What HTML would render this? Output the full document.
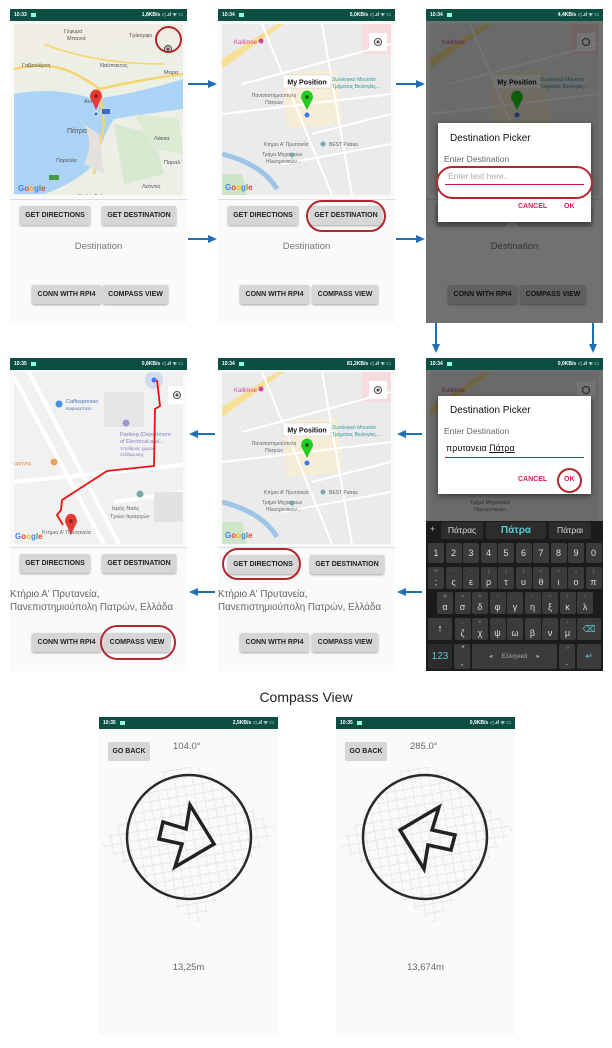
<!DOCTYPE html>
<html><head><meta charset="utf-8"><style>
*{margin:0;padding:0;box-sizing:border-box}
body{width:612px;height:1048px;background:#fff;position:relative;overflow:hidden;font-family:"Liberation Sans","DejaVu Sans",sans-serif}
.a{position:absolute}
.scr{position:absolute;background:#fafafa;overflow:hidden}
.sb{position:absolute;left:0;top:0;right:0;height:12px;background:#0b4f43;color:#fff;font-size:5px;font-weight:bold;line-height:12px;padding:0 4px}
.sb .r{position:absolute;right:4px;top:0}
.sb .ic{display:inline-block;width:5px;height:4px;background:#8fd;margin-left:3px;vertical-align:middle}
.btn{position:absolute;height:19px;background:#d6d6d6;border-radius:2px;box-shadow:0 1px 2px rgba(0,0,0,.35);font-size:7px;font-weight:bold;color:#222;text-align:center;line-height:19px;white-space:nowrap}
.dest{position:absolute;left:0;right:0;text-align:center;font-size:9.5px;color:#777}
.addr{position:absolute;left:0;font-size:9.8px;color:#666;line-height:13px;white-space:nowrap}
.ell{position:absolute;border:2.5px solid #b3262d;border-radius:50%}
.dim{position:absolute;left:0;right:0;bottom:0;top:12px;background:rgba(0,0,0,.55)}
.dlg{position:absolute;background:#fff;box-shadow:0 2px 6px rgba(0,0,0,.5)}
.kb{position:absolute;background:#1b1b1b}
.key{position:absolute;background:#3b3b3b;border-radius:2px;color:#ddd;text-align:center;font-size:9px}
.key small{position:absolute;top:1px;left:0;right:0;font-size:4px;color:#999}
.key span{position:absolute;bottom:2px;left:0;right:0}
</style></head><body>

<svg class="a" style="left:0;top:0" width="612" height="700">
<g stroke="#1f6fb5" stroke-width="2" fill="#1f6fb5">
<line x1="188" y1="84" x2="210" y2="84"/><polygon points="217,84 208,80 208,88" stroke="none"/>
<line x1="188" y1="239" x2="210" y2="239"/><polygon points="217,239 208,235 208,243" stroke="none"/>
<line x1="396" y1="84" x2="418" y2="84"/><polygon points="425,84 416,80 416,88" stroke="none"/>
<line x1="396" y1="239" x2="418" y2="239"/><polygon points="425,239 416,235 416,243" stroke="none"/>
<line x1="436" y1="323" x2="436" y2="345"/><polygon points="436,353 432,344 440,344" stroke="none"/>
<line x1="593" y1="323" x2="593" y2="345"/><polygon points="593,353 589,344 597,344" stroke="none"/>
<line x1="422" y1="434" x2="405" y2="434"/><polygon points="397,434 406,430 406,438" stroke="none"/>
<line x1="422" y1="592" x2="405" y2="592"/><polygon points="397,592 406,588 406,596" stroke="none"/>
<line x1="215" y1="434" x2="197" y2="434"/><polygon points="189,434 198,430 198,438" stroke="none"/>
<line x1="215" y1="592" x2="197" y2="592"/><polygon points="189,592 198,588 198,596" stroke="none"/>
</g></svg>

<!-- SCREEN A -->
<div class="scr" style="left:10px;top:9px;width:177px;height:314px">
<div class="sb">10:33 <span class="ic"></span><span class="r">1,8KB/s ◁ .ıl ᯤ ▭</span></div>
<svg class="a" style="left:4px;top:15px" width="169" height="171">
<rect width="169" height="171" fill="#ecefe6"/>
<path d="M0,70 Q40,60 80,75 Q120,70 169,55 L169,85 Q130,90 100,95 Q90,110 80,140 Q60,160 30,170 L0,170 Z" fill="#aad3f5"/>
<path d="M0,60 Q40,50 80,60 Q120,55 169,40 L169,55 Q120,70 80,75 Q40,62 0,70 Z" fill="#ecefe6"/>
<path d="M0,35 Q60,20 169,20 L169,0 L0,0 Z" fill="#f0ede5"/>
<path d="M100,100 L140,110 L150,150 L110,160 Z" fill="#d6e8d0"/>
<path d="M120,90 L165,95 L169,130 L140,125 Z" fill="#dcebd3"/>
<path d="M0,45 Q40,35 70,55 Q80,60 85,65 L90,100 L80,150 M85,65 Q130,55 169,50" stroke="#f6d56a" stroke-width="2.5" fill="none"/>
<path d="M30,20 Q80,40 150,40" stroke="#f6d56a" stroke-width="1.5" fill="none"/>
<path d="M70,100 Q80,120 70,140 L90,150 L85,110 Z" fill="#e4e1dc"/>
<g font-size="5.5" fill="#555">
<text x="50" y="9">Γέφυρα</text><text x="53" y="16">Μπανιά</text>
<text x="115" y="13">Τρίκορφο</text><text x="86" y="43">Ναύπακτος</text>
<text x="8" y="43">Γαβρολίμνη</text><text x="150" y="50">Μαρα</text>
<text x="70" y="79">Αντιρ</text><text x="53" y="109" font-size="7">Πάτρα</text>
<text x="140" y="116">Λάκκα</text><text x="150" y="140">Παραλ</text>
<text x="42" y="138">Παραλία</text><text x="128" y="164">Λεόντιο</text>
<text x="65" y="174">Χαλανδρίτσα</text></g>
<rect x="35" y="151" width="10" height="5" fill="#4a9a40"/><rect x="88" y="85" width="8" height="5" fill="#3b6bd0"/>
<text x="4" y="167" font-size="8" font-weight="bold" fill="#4285f4">G<tspan fill="#ea4335">o</tspan><tspan fill="#fbbc05">o</tspan><tspan fill="#4285f4">g</tspan><tspan fill="#34a853">l</tspan><tspan fill="#ea4335">e</tspan></text>
<path d="M76,73 C76,63 88,63 88,73 Q85,79 82,86 Q79,79 76,73 Z" fill="#e53935"/>
<circle cx="82" cy="72" r="1.8" fill="#8b1c1c"/>
<circle cx="82" cy="90" r="2.2" fill="#3b7bf0" stroke="#fff" stroke-width=".8"/>
<circle cx="154" cy="25" r="3.5" fill="none" stroke="#555" stroke-width="1.2"/><circle cx="154" cy="25" r="1.7" fill="#555"/>
</svg>
<div class="ell" style="left:145px;top:17px;width:27px;height:27px"></div>
<div class="a" style="left:0;right:0;top:190px;height:1px;background:#ddd"></div>
<div class="btn" style="left:10px;top:197px;width:70px">GET DIRECTIONS</div>
<div class="btn" style="left:92px;top:197px;width:74px">GET DESTINATION</div>
<div class="dest" style="top:232px">Destination</div>
<div class="btn" style="left:22px;top:276px;width:69px">CONN WITH RPI4</div>
<div class="btn" style="left:93px;top:276px;width:65px">COMPASS VIEW</div>
</div>

<!-- SCREEN B -->
<div class="scr" style="left:218px;top:9px;width:177px;height:314px">
<div class="sb">10:34 <span class="ic"></span><span class="r">5,0KB/s ◁ .ıl ᯤ ▭</span></div>
<svg class="a" style="left:4px;top:15px" width="169" height="171">
<rect width="169" height="171" fill="#ebebeb"/>
<path d="M0,35 L55,0 L62,0 L0,45 Z" fill="#f7df95"/>
<path d="M60,50 L115,45 L120,100 L65,105 Z" fill="#f5edd5"/>
<path d="M140,0 L169,0 L169,30 L140,30 Z" fill="#f6dcdc"/>
<path d="M0,130 Q40,140 55,165" stroke="#9ec4e8" stroke-width="5" fill="none"/>
<path d="M0,150 L20,150 L25,171 L0,171Z" fill="#cfe5c9"/>
<g stroke="#fff" stroke-width="2" fill="none"><path d="M20,60 L169,20 M40,0 L110,171 M0,90 L169,70 M90,110 L169,90 M60,140 L169,120 M100,0 L130,171"/></g>
<text x="12" y="20" font-size="6" fill="#d6479a">Kallimoe</text><circle cx="39" cy="17" r="2.5" fill="#d6479a"/>
<rect x="61" y="51" width="48" height="13" fill="#fff" stroke="#ccc" stroke-width=".5"/>
<text x="85" y="60.5" font-size="7" font-weight="bold" text-anchor="middle" fill="#111">My Position</text>
<path d="M79,74 C79,64 91,64 91,74 Q88,80 85,86 Q82,80 79,74 Z" fill="#22cc22"/><circle cx="85" cy="73" r="1.8" fill="#0a5a0a"/>
<circle cx="85" cy="91" r="2.5" fill="#3b7bf0"/>
<g font-size="5" fill="#666"><text x="52" y="73" text-anchor="middle">Πανεπιστημιούπολη</text><text x="52" y="80" text-anchor="middle">Πατρών</text>
<text x="42" y="122">Κτήριο Α' Πρυτανεία</text><text x="40" y="132">Τμήμα Μηχανικών</text><text x="44" y="139">Ηλεκτρονικών...</text></g>
<g font-size="5" fill="#2a9a9a"><text x="110" y="57">Ζωολογικό Μουσείο</text><text x="110" y="64">Τμήματος Βιολογίας...</text></g>
<circle cx="101" cy="120" r="2.5" fill="#7aa"/><text x="107" y="122" font-size="5" fill="#666">BEST Patras</text>
<circle cx="70" cy="131" r="2.5" fill="#7aa"/>
<rect x="147" y="9" width="18" height="18" fill="#fff"/><circle cx="156" cy="18" r="3.5" fill="none" stroke="#555" stroke-width="1.1"/><circle cx="156" cy="18" r="1.6" fill="#555"/>
<text x="3" y="166" font-size="8" font-weight="bold" fill="#4285f4">G<tspan fill="#ea4335">o</tspan><tspan fill="#fbbc05">o</tspan><tspan fill="#4285f4">g</tspan><tspan fill="#34a853">l</tspan><tspan fill="#ea4335">e</tspan></text>
</svg>
<div class="a" style="left:0;right:0;top:190px;height:1px;background:#ddd"></div>
<div class="btn" style="left:10px;top:197px;width:70px">GET DIRECTIONS</div>
<div class="btn" style="left:92px;top:197px;width:72px">GET DESTINATION</div>
<div class="ell" style="left:88px;top:191px;width:80px;height:32px;border-radius:16px"></div>
<div class="dest" style="top:232px">Destination</div>
<div class="btn" style="left:22px;top:276px;width:69px">CONN WITH RPI4</div>
<div class="btn" style="left:94px;top:276px;width:66px">COMPASS VIEW</div>
</div>

<!-- SCREEN C -->
<div class="scr" style="left:426px;top:9px;width:177px;height:314px">
<div class="sb">10:34 <span class="ic"></span><span class="r">4,4KB/s ◁ .ıl ᯤ ▭</span></div>
<svg class="a" style="left:4px;top:15px" width="169" height="171">
<rect width="169" height="171" fill="#ebebeb"/>
<path d="M0,35 L55,0 L62,0 L0,45 Z" fill="#f7df95"/>
<path d="M60,50 L115,45 L120,100 L65,105 Z" fill="#f5edd5"/>
<path d="M140,0 L169,0 L169,30 L140,30 Z" fill="#f6dcdc"/>
<g stroke="#fff" stroke-width="2" fill="none"><path d="M20,60 L169,20 M40,0 L110,171 M0,90 L169,70"/></g>
<text x="12" y="20" font-size="6" fill="#d6479a">Kallimoe</text>
<rect x="63" y="51" width="48" height="13" fill="#fff"/>
<text x="87" y="60.5" font-size="7" font-weight="bold" text-anchor="middle" fill="#111">My Position</text>
<path d="M81,74 C81,64 93,64 93,74 Q90,80 87,86 Q84,80 81,74 Z" fill="#22cc22"/>
<circle cx="87" cy="91" r="2.5" fill="#3b7bf0"/>
<g font-size="5" fill="#2a9a9a"><text x="110" y="57">Ζωολογικό Μουσείο</text><text x="110" y="64">Τμήματος Βιολογίας...</text></g>
<rect x="147" y="9" width="18" height="18" fill="#fff"/><circle cx="156" cy="18" r="3.5" fill="none" stroke="#555" stroke-width="1.1"/>
</svg>
<div class="a" style="left:0;right:0;top:190px;height:1px;background:#ddd"></div>
<div class="btn" style="left:10px;top:197px;width:70px"></div>
<div class="btn" style="left:92px;top:197px;width:74px"></div>
<div class="dest" style="top:232px">Destination</div>
<div class="btn" style="left:22px;top:276px;width:69px">CONN WITH RPI4</div>
<div class="btn" style="left:94px;top:276px;width:66px">COMPASS VIEW</div>
<div class="dim"></div>
<div class="dlg" style="left:12px;top:114px;width:153px;height:99px">
<div class="a" style="left:12px;top:10px;font-size:10px;color:#111">Destination Picker</div>
<div class="a" style="left:6px;top:31px;font-size:8.5px;color:#666">Enter Destination</div>
<div class="a" style="left:10px;top:48px;font-size:8.5px;color:#aaa">Enter text here..</div>
<div class="a" style="left:7px;top:61px;width:139px;height:1px;background:#c2185b"></div>
<div class="a" style="left:80px;top:80px;font-size:7px;font-weight:bold;color:#d81b60">CANCEL</div>
<div class="a" style="left:126px;top:80px;font-size:7px;font-weight:bold;color:#d81b60">OK</div>
</div>
<div class="ell" style="left:10px;top:157px;width:157px;height:33px;border-radius:17px"></div>
</div>

<!-- SCREEN D -->
<div class="scr" style="left:10px;top:358px;width:177px;height:313px">
<div class="sb">10:35 <span class="ic"></span><span class="r">0,8KB/s ◁ .ıl ᯤ ▭</span></div>
<svg class="a" style="left:4px;top:14px" width="169" height="172">
<rect width="169" height="172" fill="#f1f1f1"/>
<g stroke="#fff" stroke-width="4" fill="none"><path d="M0,5 L90,172 M15,0 L105,172 M100,130 L169,120 M0,110 L169,93"/></g>
<path d="M90,20 L130,20 L130,55 L90,55 Z" fill="#e6e6e6"/>
<path d="M140,120 L169,120 L169,150 L140,150Z" fill="#e2e2e2"/>
<circle cx="45" cy="32" r="3.5" fill="#4a90e2"/><text x="52" y="31" font-size="5.5" fill="#4a7ab0">Caffespresso</text><text x="52" y="38" font-size="4.5" fill="#4a7ab0">Καφεκοπτείο</text>
<circle cx="112" cy="51" r="3.5" fill="#9f98d8"/>
<g font-size="5.5" fill="#8080c0"><text x="106" y="64">Parking (Department</text><text x="106" y="71">of Electrical and...</text></g>
<g font-size="4.5" fill="#8080c0"><text x="106" y="78">Υπαίθριος χώρος</text><text x="106" y="84">στάθμευσης</text></g>
<text x="0" y="93" font-size="5.5" fill="#e38b40">υρήνης</text><circle cx="40" cy="90" r="3.5" fill="#f0a050"/>
<circle cx="126" cy="122" r="3.5" fill="#7aa"/>
<g font-size="5.5" fill="#666"><text x="98" y="138">Ιερός Ναός</text><text x="96" y="146">Τριών Ιεραρχών</text><text x="28" y="162">Κτήριο Α' Πρυτανεία</text></g>
<text x="1" y="167" font-size="8" font-weight="bold" fill="#4285f4">G<tspan fill="#ea4335">o</tspan><tspan fill="#fbbc05">o</tspan><tspan fill="#4285f4">g</tspan><tspan fill="#34a853">l</tspan><tspan fill="#ea4335">e</tspan></text>
<circle cx="140" cy="8" r="9" fill="#c8d6ef" opacity=".8"/><circle cx="140" cy="8" r="2.5" fill="#3b7bf0"/>
<polyline points="143,8 146,34 141,37 140,94 93,99 48,128 47,138 43,143 49,153" fill="none" stroke="#ee1111" stroke-width="1.8"/>
<path d="M51,150 C51,139 63,139 63,150 Q60,156 57,163 Q54,156 51,150 Z" fill="#e53935"/><circle cx="57" cy="149" r="1.8" fill="#8b1c1c"/>
<rect x="154" y="14" width="18" height="18" fill="#fff"/><circle cx="163" cy="23" r="3.5" fill="none" stroke="#555" stroke-width="1.1"/><circle cx="163" cy="23" r="1.6" fill="#555"/>
</svg>
<div class="a" style="left:0;right:0;top:189px;height:1px;background:#ddd"></div>
<div class="btn" style="left:10px;top:196px;width:70px">GET DIRECTIONS</div>
<div class="btn" style="left:92px;top:196px;width:74px">GET DESTINATION</div>
<div class="addr" style="top:230px">Κτήριο Α' Πρυτανεία,<br>Πανεπιστημιούπολη Πατρών, Ελλάδα</div>
<div class="btn" style="left:22px;top:275px;width:69px">CONN WITH RPI4</div>
<div class="btn" style="left:94px;top:275px;width:66px">COMPASS VIEW</div>
<div class="ell" style="left:90px;top:267px;width:76px;height:35px;border-radius:18px"></div>
</div>

<!-- SCREEN E -->
<div class="scr" style="left:218px;top:358px;width:177px;height:313px">
<div class="sb">10:34 <span class="ic"></span><span class="r">81,2KB/s ◁ .ıl ᯤ ▭</span></div>
<svg class="a" style="left:4px;top:14px" width="169" height="172">
<rect width="169" height="172" fill="#ebebeb"/>
<path d="M0,35 L55,0 L62,0 L0,45 Z" fill="#f7df95"/>
<path d="M60,50 L115,45 L120,100 L65,105 Z" fill="#f5edd5"/>
<path d="M140,0 L169,0 L169,30 L140,30 Z" fill="#f6dcdc"/>
<path d="M0,130 Q40,140 55,165" stroke="#9ec4e8" stroke-width="5" fill="none"/>
<path d="M0,150 L20,150 L25,172 L0,172Z" fill="#cfe5c9"/>
<g stroke="#fff" stroke-width="2" fill="none"><path d="M20,60 L169,20 M40,0 L110,172 M0,90 L169,70 M90,110 L169,90 M60,140 L169,120 M100,0 L130,172"/></g>
<text x="12" y="20" font-size="6" fill="#d6479a">Kallimoe</text><circle cx="39" cy="17" r="2.5" fill="#d6479a"/>
<rect x="61" y="51" width="48" height="13" fill="#fff" stroke="#ccc" stroke-width=".5"/>
<text x="85" y="60.5" font-size="7" font-weight="bold" text-anchor="middle" fill="#111">My Position</text>
<path d="M79,74 C79,64 91,64 91,74 Q88,80 85,86 Q82,80 79,74 Z" fill="#22cc22"/><circle cx="85" cy="73" r="1.8" fill="#0a5a0a"/>
<circle cx="85" cy="91" r="2.5" fill="#3b7bf0"/>
<g font-size="5" fill="#666"><text x="52" y="73" text-anchor="middle">Πανεπιστημιούπολη</text><text x="52" y="80" text-anchor="middle">Πατρών</text>
<text x="42" y="122">Κτήριο Α' Πρυτανεία</text><text x="40" y="132">Τμήμα Μηχανικών</text><text x="44" y="139">Ηλεκτρονικών...</text></g>
<g font-size="5" fill="#2a9a9a"><text x="110" y="57">Ζωολογικό Μουσείο</text><text x="110" y="64">Τμήματος Βιολογίας...</text></g>
<circle cx="101" cy="120" r="2.5" fill="#7aa"/><text x="107" y="122" font-size="5" fill="#666">BEST Patras</text>
<circle cx="70" cy="131" r="2.5" fill="#7aa"/>
<rect x="147" y="9" width="18" height="18" fill="#fff"/><circle cx="156" cy="18" r="3.5" fill="none" stroke="#555" stroke-width="1.1"/><circle cx="156" cy="18" r="1.6" fill="#555"/>
<text x="3" y="166" font-size="8" font-weight="bold" fill="#4285f4">G<tspan fill="#ea4335">o</tspan><tspan fill="#fbbc05">o</tspan><tspan fill="#4285f4">g</tspan><tspan fill="#34a853">l</tspan><tspan fill="#ea4335">e</tspan></text>
</svg>
<div class="a" style="left:0;right:0;top:189px;height:1px;background:#ddd"></div>
<div class="btn" style="left:10px;top:197px;width:70px">GET DIRECTIONS</div>
<div class="btn" style="left:92px;top:197px;width:74px">GET DESTINATION</div>
<div class="ell" style="left:4px;top:190px;width:79px;height:32px;border-radius:16px"></div>
<div class="addr" style="top:230px">Κτήριο Α' Πρυτανεία,<br>Πανεπιστημιούπολη Πατρών, Ελλάδα</div>
<div class="btn" style="left:22px;top:275px;width:69px">CONN WITH RPI4</div>
<div class="btn" style="left:94px;top:275px;width:66px">COMPASS VIEW</div>
</div>

<!-- SCREEN F -->
<div class="scr" style="left:426px;top:358px;width:177px;height:313px">
<div class="sb">10:34 <span class="ic"></span><span class="r">0,0KB/s ◁ .ıl ᯤ ▭</span></div>
<svg class="a" style="left:4px;top:14px" width="169" height="150">
<rect width="169" height="150" fill="#ebebeb"/>
<path d="M0,35 L55,0 L62,0 L0,45 Z" fill="#f7df95"/>
<text x="12" y="20" font-size="6" fill="#d6479a">Kallimoe</text>
<g font-size="5" fill="#666"><text x="40" y="132">Τμήμα Μηχανικών</text><text x="44" y="139">Ηλεκτρονικών...</text></g>
<rect x="147" y="9" width="18" height="18" fill="#fff"/><circle cx="156" cy="18" r="3.5" fill="none" stroke="#555" stroke-width="1.1"/>
</svg>
<div class="dim" style="bottom:150px"></div>
<div class="dlg" style="left:12px;top:38px;width:153px;height:98px">
<div class="a" style="left:12px;top:9px;font-size:10px;color:#111">Destination Picker</div>
<div class="a" style="left:6px;top:30px;font-size:8.5px;color:#666">Enter Destination</div>
<div class="a" style="left:8px;top:47px;font-size:9px;color:#111">πρυτανεια <u>Πάτρα</u></div>
<div class="a" style="left:7px;top:61px;width:139px;height:1px;background:#c2185b"></div>
<div class="a" style="left:80px;top:80px;font-size:7px;font-weight:bold;color:#d81b60">CANCEL</div>
<div class="a" style="left:126px;top:80px;font-size:7px;font-weight:bold;color:#d81b60">OK</div>
</div>
<div class="ell" style="left:131px;top:110px;width:25px;height:25px"></div>
<div class="kb" style="left:0;top:163px;width:177px;height:150px">
<div class="a" style="left:4px;top:3px;color:#ccc;font-size:9px">+</div>
<div class="key" style="left:15px;top:1px;width:42px;height:17px;background:#2c2c2c;line-height:17px;font-size:8.5px">Πάτρας</div>
<div class="key" style="left:60px;top:1px;width:60px;height:17px;background:#2c2c2c;line-height:17px;font-size:10px;font-weight:bold;color:#5cc9d0">Πάτρα</div>
<div class="key" style="left:123px;top:1px;width:42px;height:17px;background:#2c2c2c;line-height:17px;font-size:8.5px">Πάτραι</div>
<div class="a" style="left:2px;top:22px;width:175px;height:20px">
<div class="key" style="left:0;top:0;width:16px;height:20px;line-height:20px">1</div><div class="key" style="left:17.5px;top:0;width:16px;height:20px;line-height:20px">2</div><div class="key" style="left:35px;top:0;width:16px;height:20px;line-height:20px">3</div><div class="key" style="left:52.5px;top:0;width:16px;height:20px;line-height:20px">4</div><div class="key" style="left:70px;top:0;width:16px;height:20px;line-height:20px">5</div><div class="key" style="left:87.5px;top:0;width:16px;height:20px;line-height:20px">6</div><div class="key" style="left:105px;top:0;width:16px;height:20px;line-height:20px">7</div><div class="key" style="left:122.5px;top:0;width:16px;height:20px;line-height:20px">8</div><div class="key" style="left:140px;top:0;width:16px;height:20px;line-height:20px">9</div><div class="key" style="left:157.5px;top:0;width:16px;height:20px;line-height:20px">0</div>
</div>
<div class="a" style="left:2px;top:46px;width:175px;height:22px">
<div class="key" style="left:0;width:16px;height:22px"><small>%</small><span>;</span></div><div class="key" style="left:17.5px;width:16px;height:22px"><small>^</small><span>ς</span></div><div class="key" style="left:35px;width:16px;height:22px"><small>~</small><span>ε</span></div><div class="key" style="left:52.5px;width:16px;height:22px"><small>|</small><span>ρ</span></div><div class="key" style="left:70px;width:16px;height:22px"><small>[</small><span>τ</span></div><div class="key" style="left:87.5px;width:16px;height:22px"><small>]</small><span>υ</span></div><div class="key" style="left:105px;width:16px;height:22px"><small>&lt;</small><span>θ</span></div><div class="key" style="left:122.5px;width:16px;height:22px"><small>&gt;</small><span>ι</span></div><div class="key" style="left:140px;width:16px;height:22px"><small>{</small><span>ο</span></div><div class="key" style="left:157.5px;width:16px;height:22px"><small>}</small><span>π</span></div>
</div>
<div class="a" style="left:11px;top:71px;width:166px;height:22px">
<div class="key" style="left:0;width:16px;height:22px"><small>@</small><span>α</span></div><div class="key" style="left:17.5px;width:16px;height:22px"><small>#</small><span>σ</span></div><div class="key" style="left:35px;width:16px;height:22px"><small>&amp;</small><span>δ</span></div><div class="key" style="left:52.5px;width:16px;height:22px"><small>*</small><span>φ</span></div><div class="key" style="left:70px;width:16px;height:22px"><small>-</small><span>γ</span></div><div class="key" style="left:87.5px;width:16px;height:22px"><small>+</small><span>η</span></div><div class="key" style="left:105px;width:16px;height:22px"><small>=</small><span>ξ</span></div><div class="key" style="left:122.5px;width:16px;height:22px"><small>(</small><span>κ</span></div><div class="key" style="left:140px;width:16px;height:22px"><small>)</small><span>λ</span></div>
</div>
<div class="a" style="left:2px;top:97px;width:175px;height:22px">
<div class="key" style="left:0;width:24px;height:22px;line-height:22px;font-size:11px">↑</div>
<div class="key" style="left:26.5px;width:16px;height:22px"><small>_</small><span>ζ</span></div><div class="key" style="left:44px;width:16px;height:22px"><small>€</small><span>χ</span></div><div class="key" style="left:61.5px;width:16px;height:22px"><small>"</small><span>ψ</span></div><div class="key" style="left:79px;width:16px;height:22px"><small>'</small><span>ω</span></div><div class="key" style="left:96.5px;width:16px;height:22px"><small>:</small><span>β</span></div><div class="key" style="left:114px;width:16px;height:22px"><small>-</small><span>ν</span></div><div class="key" style="left:131.5px;width:16px;height:22px"><small>/</small><span>μ</span></div>
<div class="key" style="left:149px;width:24px;height:22px;line-height:22px;color:#5cc9d0">⌫</div>
</div>
<div class="a" style="left:2px;top:123px;width:175px;height:25px">
<div class="key" style="left:0;width:24px;height:25px;line-height:25px;font-size:10px;color:#5cc9d0;background:#2c2c2c">123</div>
<div class="key" style="left:26px;width:16px;height:25px"><small>🎤</small><span>,</span></div>
<div class="key" style="left:44px;width:85px;height:25px;line-height:25px;font-size:6.5px;color:#aaa">◂ &nbsp;&nbsp;&nbsp; Ελληνικά &nbsp;&nbsp;&nbsp; ▸</div>
<div class="key" style="left:131px;width:16px;height:25px"><small>.!?</small><span>.</span></div>
<div class="key" style="left:149px;width:24px;height:25px;line-height:25px;color:#5cc9d0">↵</div>
</div>
</div>
</div>

<div class="a" style="left:0;width:612px;top:689px;text-align:center;font-size:14px;color:#222">Compass View</div>

<!-- COMPASS 1 -->
<div class="scr" style="left:99px;top:717px;width:179px;height:318px">
<div class="sb">10:35 <span class="ic"></span><span class="r">2,5KB/s ◁ .ıl ᯤ ▭</span></div>
<div class="btn" style="left:9px;top:25px;width:42px;height:19px;box-shadow:none">GO BACK</div>
<div class="a" style="left:74px;top:24px;font-size:9.5px;color:#666">104.0°</div>
<svg class="a" style="left:0;top:50px" width="179" height="240">
<defs><pattern id="g1" width="9" height="9" patternUnits="userSpaceOnUse" patternTransform="rotate(40)"><path d="M0,0.5 H9 M0.5,0 V9" stroke="#e3e3e3" stroke-width="0.8" fill="none"/></pattern></defs>
<rect x="28" y="8" width="124" height="124" fill="url(#g1)" transform="rotate(40 90 70)"/>
<circle cx="90" cy="70" r="62" fill="none" stroke="#2a2a2a" stroke-width="2.5"/>
<polygon points="64,55 87,62 91,38 115,77 76,100 83,77 60,72" fill="none" stroke="#222" stroke-width="3.5" stroke-linejoin="miter"/>
</svg>
<div class="a" style="left:0;right:0;top:245px;text-align:center;font-size:9.5px;color:#666">13,25m</div>
</div>

<!-- COMPASS 2 -->
<div class="scr" style="left:336px;top:717px;width:179px;height:318px">
<div class="sb">10:35 <span class="ic"></span><span class="r">0,9KB/s ◁ .ıl ᯤ ▭</span></div>
<div class="btn" style="left:9px;top:25px;width:42px;height:19px;box-shadow:none">GO BACK</div>
<div class="a" style="left:74px;top:24px;font-size:9.5px;color:#666">285.0°</div>
<svg class="a" style="left:0;top:50px" width="179" height="240">
<defs><pattern id="g2" width="9" height="9" patternUnits="userSpaceOnUse" patternTransform="rotate(40)"><path d="M0,0.5 H9 M0.5,0 V9" stroke="#e3e3e3" stroke-width="0.8" fill="none"/></pattern></defs>
<rect x="28" y="8" width="124" height="124" fill="url(#g2)" transform="rotate(40 90 70)"/>
<circle cx="89" cy="70" r="62" fill="none" stroke="#2a2a2a" stroke-width="2.5"/>
<polygon points="115,83 92,78 88,102 64,63 103,40 96,63 119,68" fill="none" stroke="#222" stroke-width="3.5" stroke-linejoin="miter"/>
</svg>
<div class="a" style="left:0;right:0;top:245px;text-align:center;font-size:9.5px;color:#666">13,674m</div>
</div>

</body></html>
